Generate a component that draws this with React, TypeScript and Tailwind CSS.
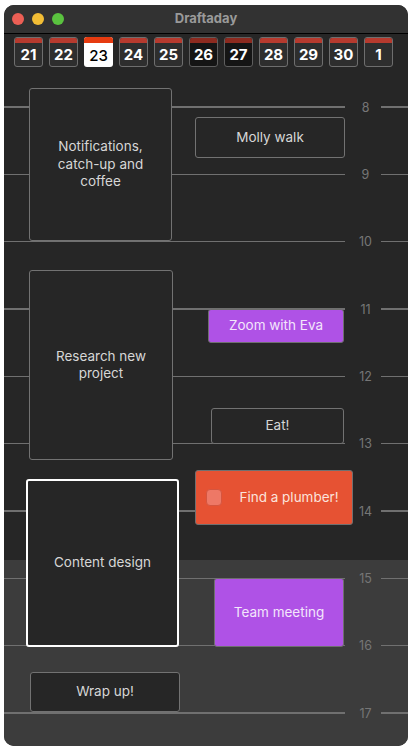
import React from "react";

const days = [
  { n: "21", kind: "normal" },
  { n: "22", kind: "normal" },
  { n: "23", kind: "today" },
  { n: "24", kind: "normal" },
  { n: "25", kind: "normal" },
  { n: "26", kind: "weekend" },
  { n: "27", kind: "weekend" },
  { n: "28", kind: "normal" },
  { n: "29", kind: "normal" },
  { n: "30", kind: "normal" },
  { n: "1", kind: "normal" },
];

const hours = [8, 9, 10, 11, 12, 13, 14, 15, 16, 17];
const HOUR_H = 67.33;
const FIRST_LINE = 73;

type Ev = {
  label: string;
  left: number;
  top: number;
  w: number;
  h: number;
  kind: "plain" | "purple" | "red" | "selected";
};

const events: Ev[] = [
  { label: "Notifications,\ncatch-up and\ncoffee", left: 25, top: 54, w: 143, h: 153, kind: "plain" },
  { label: "Molly walk", left: 191, top: 83, w: 150, h: 41, kind: "plain" },
  { label: "Research new\nproject", left: 25, top: 236, w: 144, h: 190, kind: "plain" },
  { label: "Zoom with Eva", left: 204, top: 275, w: 136, h: 34, kind: "purple" },
  { label: "Eat!", left: 207, top: 374, w: 133, h: 36, kind: "plain" },
  { label: "Find a plumber!", left: 191, top: 436, w: 158, h: 55, kind: "red" },
  { label: "Content design", left: 22, top: 445, w: 153, h: 168, kind: "selected" },
  { label: "Team meeting", left: 210, top: 544, w: 130, h: 69, kind: "purple" },
  { label: "Wrap up!", left: 26, top: 638, w: 150, h: 40, kind: "plain" },
];

function Tile({ n, kind }: { n: string; kind: string }) {
  if (kind === "today") {
    return (
      <div className="w-[29px] h-[30px] rounded-[3px] overflow-hidden flex flex-col bg-white">
        <div className="h-[6px] bg-[#e63b10]" />
        <div className="flex-1 flex items-center justify-center text-[15px] font-medium text-black leading-none">
          {n}
        </div>
      </div>
    );
  }
  const weekend = kind === "weekend";
  return (
    <div
      className={
        weekend
          ? "w-[29px] h-[30px] rounded-[3px] overflow-hidden flex flex-col border border-[#5e5e5e] bg-[#151515]"
          : "w-[29px] h-[30px] rounded-[3px] overflow-hidden flex flex-col border border-[#6e6e6e] bg-[#2e2e2e]"
      }
    >
      <div className={weekend ? "h-[5px] bg-[#8c2a1f]" : "h-[5px] bg-[#b63a2e]"} />
      <div className="flex-1 flex items-center justify-center text-[15px] font-bold text-white leading-none">
        {n}
      </div>
    </div>
  );
}

function EventBox({ ev }: { ev: Ev }) {
  const base =
    "absolute flex items-center justify-center text-center whitespace-pre-line text-[13.5px] leading-[17.5px] rounded-[3px]";
  let cls = "";
  if (ev.kind === "plain") cls = "bg-[#262626] border-[1.5px] border-[#727272] text-[#d6d6d6]";
  if (ev.kind === "selected") cls = "bg-[#262626] border-2 border-white text-[#d6d6d6]";
  if (ev.kind === "purple") cls = "bg-[#af52e6] border-[1.5px] border-[#6f6f6f] text-[#f3e6fb]";
  if (ev.kind === "red") cls = "bg-[#e65233] border-[1.5px] border-[#707070] text-[#fbe3dc]";
  return (
    <div className={base + " " + cls} style={{ left: ev.left, top: ev.top, width: ev.w, height: ev.h }}>
      {ev.kind === "red" ? (
        <div className="flex items-center w-full pl-[10px]">
          <div className="w-[16px] h-[17px] rounded-[4px] bg-[#ee7866] border border-[#d5553f]" />
          <div className="flex-1 pl-[4px]">{ev.label}</div>
        </div>
      ) : (
        ev.label
      )}
    </div>
  );
}

export default function App() {
  return (
    <div className="w-[413px] h-[751px] bg-white pt-[5px] pl-[4px]" style={{ fontFamily: "Inter, 'Noto Sans', sans-serif" }}>
      <div className="w-[404px] h-[741px] rounded-[10px] overflow-hidden flex flex-col bg-[#262626]">
        <div className="h-[29px] bg-[#323232] border-b border-black flex items-center relative shrink-0">
          <div className="flex gap-[8px] pl-[8px]">
            <div className="w-[12px] h-[12px] rounded-full bg-[#ec5f55]" />
            <div className="w-[12px] h-[12px] rounded-full bg-[#f2bd35]" />
            <div className="w-[12px] h-[12px] rounded-full bg-[#5ac23f]" />
          </div>
          <div className="absolute inset-0 flex items-center justify-center text-[13px] font-bold text-[#9a9a9a]">
            Draftaday
          </div>
        </div>
        <div className="relative flex-1 flex flex-col">
          <div className="h-[526px] bg-[#262626] shrink-0">
            <div className="flex gap-[6px] pl-[10px] pt-[3px]">
              {days.map((d) => (
                <Tile key={d.n} n={d.n} kind={d.kind} />
              ))}
            </div>
          </div>
          <div className="flex-1 bg-[#3c3c3c]" />
          {hours.map((h) => (
            <div
              key={h}
              className="absolute left-0 right-0 flex items-center h-[16px]"
              style={{ top: FIRST_LINE + (h - 8) * HOUR_H - 8 }}
            >
              <div className="w-[341px] h-[1.5px] bg-[#707070]" />
              <div className="w-[36px] pl-[5px] pt-[2px] text-center text-[12.5px] text-[#767676] leading-none">{h}</div>
              <div className="flex-1 h-[1.5px] bg-[#707070]" />
            </div>
          ))}
          {events.map((ev) => (
            <EventBox key={ev.label} ev={ev} />
          ))}
        </div>
      </div>
    </div>
  );
}
